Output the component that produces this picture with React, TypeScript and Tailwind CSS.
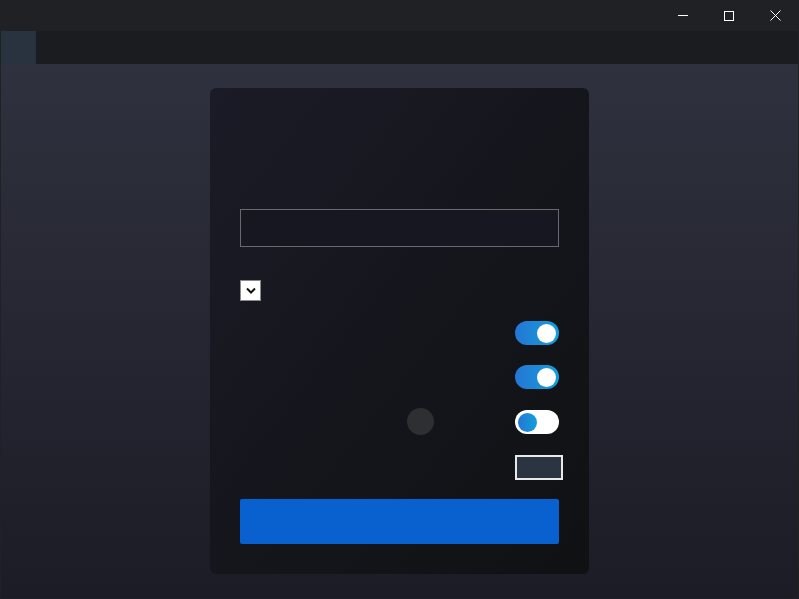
import { useState } from 'react';

function Toggle({ on }: { on: boolean }) {
	if (on) {
		return (
			<div className="flex h-[24px] w-[44px] items-center justify-end rounded-full bg-gradient-to-r from-[#2476d4] to-[#109fda] pr-[3px]">
				<div className="h-[19px] w-[19px] rounded-full bg-white" />
			</div>
		);
	}
	return (
		<div className="flex h-[24px] w-[44px] items-center justify-start rounded-full bg-white pl-[3px]">
			<div className="h-[19px] w-[19px] rounded-full bg-gradient-to-r from-[#2476d4] to-[#109fda]" />
		</div>
	);
}

export default function App() {
	const [toggles] = useState([true, true, false]);

	return (
		<div className="flex h-[599px] w-[799px] flex-col overflow-hidden border-x border-b border-[#202124] bg-[#202124] font-['Liberation_Sans',sans-serif]">
			{/* title bar */}
			<div className="flex h-[31px] shrink-0 items-stretch justify-end bg-[#202124]">
				<div className="flex w-[46px] items-center justify-center">
					<div className="h-px w-[10px] bg-white" />
				</div>
				<div className="flex w-[46px] items-center justify-center">
					<div className="h-[10px] w-[10px] border border-white" />
				</div>
				<div className="flex w-[46px] items-center justify-center">
					<svg width="11" height="11" viewBox="0 0 11 11" fill="none" stroke="white" strokeWidth="1">
						<path d="M0.5 0.5L10.5 10.5M10.5 0.5L0.5 10.5" />
					</svg>
				</div>
			</div>

			{/* nav bar */}
			<div className="flex h-[33px] shrink-0 bg-[#1b1c1f]">
				<div className="w-[35px] bg-[#29333f]" />
			</div>

			{/* main */}
			<div className="flex flex-1 justify-center bg-gradient-to-b from-[#2f313e] to-[#1c1c26] pt-[24px]">
				<div className="flex h-[486px] w-[379px] flex-col rounded-[6px] bg-gradient-to-br from-[#1a1b26] to-[#101113] px-[30px] pt-[121px]">
					<div className="h-[38px] w-full border border-[#6a6a6e] bg-[#161720]" />

					<div className="mt-[33px] flex h-[21px] w-[21px] items-center justify-center border border-[#8a8a8a] bg-white">
						<svg width="10" height="7" viewBox="0 0 10 7" fill="none" stroke="#111" strokeWidth="2">
							<path d="M1 1.5L5 5.5L9 1.5" />
						</svg>
					</div>

					<div className="mt-[20px] flex h-[24px] justify-end">
						<Toggle on={toggles[0]} />
					</div>
					<div className="mt-[20px] flex h-[24px] justify-end">
						<Toggle on={toggles[1]} />
					</div>
					<div className="relative mt-[21px] flex h-[24px] justify-end">
						<div className="absolute left-[167px] top-[-2px] h-[27px] w-[27px] rounded-full bg-[#2e2f32]" />
						<Toggle on={toggles[2]} />
					</div>

					<div className="mt-[21px] flex justify-end">
						<div className="mr-[-4px] h-[25px] w-[48px] border-2 border-[#e8e8e8] bg-[#2b3441]" />
					</div>

					<button type="button" className="mt-[19px] h-[45px] w-full rounded-[2px] bg-[#0961d0]" />
				</div>
			</div>
		</div>
	);
}
